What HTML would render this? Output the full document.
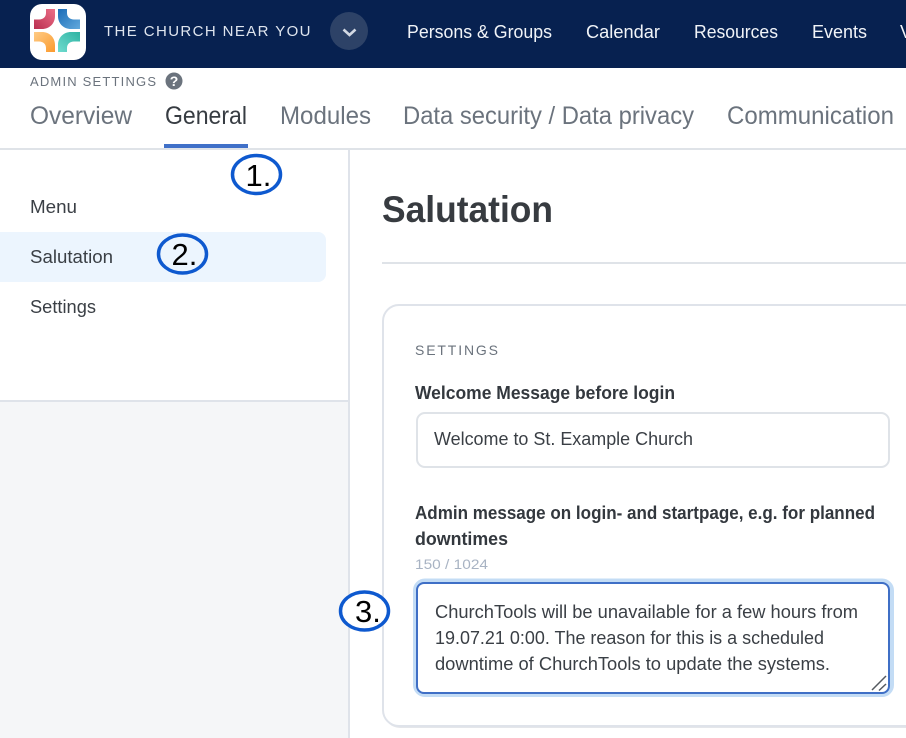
<!DOCTYPE html>
<html lang="en">
<head>
<meta charset="utf-8">
<title>Admin Settings</title>
<style>
html,body{margin:0;padding:0;width:906px;height:738px;overflow:hidden;background:#fff}
svg{display:block}
text{font-family:"Liberation Sans",sans-serif;white-space:pre}
.nav{font-size:18px;fill:#f1f4f8}
.tab{font-size:25px;fill:#6b737d}
.side{font-size:18px;fill:#3a3f45}
.b{font-size:18px;font-weight:bold;fill:#33383e}
.t{font-size:18px;fill:#3a3f45}
.n{font-size:31px;fill:#000}
</style>
</head>
<body>
<svg width="906" height="738" viewBox="0 0 906 738" xmlns="http://www.w3.org/2000/svg">
<defs>
<linearGradient id="g1" x1="0" y1="1" x2="1" y2="0"><stop offset="0" stop-color="#b92f4f"/><stop offset="1" stop-color="#ec6f88"/></linearGradient>
<linearGradient id="g2" x1="0" y1="0" x2="1" y2="1"><stop offset="0" stop-color="#1a6cb8"/><stop offset="1" stop-color="#62a9dc"/></linearGradient>
<linearGradient id="g3" x1="0" y1="0" x2="1" y2="1"><stop offset="0" stop-color="#fecb85"/><stop offset="1" stop-color="#fb9a2e"/></linearGradient>
<linearGradient id="g4" x1="1" y1="0" x2="0" y2="1"><stop offset="0" stop-color="#2fb3a3"/><stop offset="1" stop-color="#6fdccf"/></linearGradient>
</defs>

<!-- Header -->
<rect x="0" y="0" width="906" height="68" fill="#072150"/>
<rect x="30" y="4" width="56" height="56" rx="12" fill="#fff"/>
<path d="M46 9H55V16C55 24 49 29 42 29H34V19.5H39C43 19.5 46 17 46 13Z" fill="url(#g1)"/>
<path d="M58 9H67V13C67 17 70 19.5 74 19.5H80V29H71C64 29 58 24 58 16Z" fill="url(#g2)"/>
<path d="M34 32H42C49 32 55 37 55 45V52H46V48C46 44 43 41.5 39 41.5H34Z" fill="url(#g3)"/>
<path d="M80 32V41.5H74C70 41.5 67 44 67 48V52H58V45C58 37 64 32 71 32Z" fill="url(#g4)"/>
<text x="104" y="36" font-size="15" fill="#dfe5ee" textLength="206.5" lengthAdjust="spacing">THE CHURCH NEAR YOU</text>
<circle cx="349" cy="31" r="19" fill="#2d4267"/>
<path d="M343.5 29.5L349.5 35L355.5 29.5" fill="none" stroke="#d3d9e3" stroke-width="2.6"/>
<text class="nav" x="407" y="38" textLength="145" lengthAdjust="spacingAndGlyphs">Persons &amp; Groups</text>
<text class="nav" x="586" y="38" textLength="74" lengthAdjust="spacingAndGlyphs">Calendar</text>
<text class="nav" x="694" y="38" textLength="84" lengthAdjust="spacingAndGlyphs">Resources</text>
<text class="nav" x="812" y="38" textLength="55" lengthAdjust="spacingAndGlyphs">Events</text>
<text class="nav" x="900" y="38">V</text>

<!-- Sub header -->
<text x="30" y="86" font-size="13" fill="#6b737d" textLength="126" lengthAdjust="spacing">ADMIN SETTINGS</text>
<circle cx="174" cy="81" r="8.5" fill="#6b737d"/>
<text x="174" y="86" font-size="14" font-weight="bold" fill="#fff" text-anchor="middle">?</text>
<text class="tab" x="30" y="124" textLength="102" lengthAdjust="spacingAndGlyphs">Overview</text>
<text class="tab" x="165" y="124" style="fill:#373c42" textLength="82" lengthAdjust="spacingAndGlyphs">General</text>
<text class="tab" x="280" y="124" textLength="91" lengthAdjust="spacingAndGlyphs">Modules</text>
<text class="tab" x="403" y="124" textLength="291" lengthAdjust="spacingAndGlyphs">Data security / Data privacy</text>
<text class="tab" x="727" y="124" textLength="167" lengthAdjust="spacingAndGlyphs">Communication</text>
<rect x="0" y="148" width="906" height="2" fill="#dfe3e8"/>
<rect x="164" y="144" width="84" height="4" fill="#4070c8"/>

<!-- Sidebar -->
<rect x="0" y="402" width="348" height="336" fill="#f5f6f8"/>
<rect x="0" y="400" width="348" height="2" fill="#dfe3ea"/>
<rect x="348" y="150" width="2" height="588" fill="#dfe3ea"/>
<rect x="-10" y="232" width="336" height="50" rx="8" fill="#ecf5fe"/>
<text class="side" x="30" y="213" textLength="47" lengthAdjust="spacingAndGlyphs">Menu</text>
<text class="side" x="30" y="263" textLength="83" lengthAdjust="spacingAndGlyphs">Salutation</text>
<text class="side" x="30" y="313" textLength="66" lengthAdjust="spacingAndGlyphs">Settings</text>

<!-- Main -->
<text x="382" y="222" font-size="37" font-weight="bold" fill="#373b40" textLength="171" lengthAdjust="spacingAndGlyphs">Salutation</text>
<rect x="382" y="262" width="524" height="2" fill="#dfe3e8"/>

<!-- Card -->
<rect x="384" y="308" width="540" height="420" rx="16" fill="#e4e6ea"/>
<rect x="383" y="305" width="540" height="421" rx="16" fill="#fff" stroke="#dfe3ea" stroke-width="2"/>
<text x="415" y="355" font-size="14" fill="#6b737d" textLength="83" lengthAdjust="spacing">SETTINGS</text>
<text class="b" x="415" y="399" textLength="260" lengthAdjust="spacingAndGlyphs">Welcome Message before login</text>
<rect x="417" y="413" width="472" height="54" rx="8" fill="#fff" stroke="#dfe3e8" stroke-width="2"/>
<text class="t" x="434" y="445" textLength="259" lengthAdjust="spacingAndGlyphs">Welcome to St. Example Church</text>
<text class="b" x="415" y="519" textLength="460" lengthAdjust="spacingAndGlyphs">Admin message on login- and startpage, e.g. for planned</text>
<text class="b" x="415" y="545" textLength="93" lengthAdjust="spacingAndGlyphs">downtimes</text>
<text x="415" y="569" font-size="14" fill="#a8b3c3" textLength="73" lengthAdjust="spacingAndGlyphs">150 / 1024</text>

<!-- Textarea -->
<rect x="415" y="580.5" width="477" height="114.5" rx="10" fill="#fff" stroke="#c3dcf5" stroke-width="4"/>
<rect x="417" y="583" width="472" height="110" rx="7" fill="#fff" stroke="#3f6fc6" stroke-width="2"/>
<text class="t" x="435" y="618" textLength="423" lengthAdjust="spacingAndGlyphs">ChurchTools will be unavailable for a few hours from</text>
<text class="t" x="435" y="644" textLength="389" lengthAdjust="spacingAndGlyphs">19.07.21 0:00. The reason for this is a scheduled</text>
<text class="t" x="435" y="670" textLength="395" lengthAdjust="spacingAndGlyphs">downtime of ChurchTools to update the systems.</text>
<path d="M872 690L886 676M879 690.5L886 684" stroke="#555a60" stroke-width="1.5" fill="none"/>

<!-- Annotations -->
<ellipse cx="256.5" cy="174.5" rx="24" ry="19" fill="#fff" stroke="#0e59cf" stroke-width="3.5"/>
<text class="n" x="245.5" y="186">1.</text>
<ellipse cx="182.5" cy="254" rx="24" ry="19" fill="none" stroke="#0e59cf" stroke-width="3.5"/>
<text class="n" x="171.5" y="265">2.</text>
<ellipse cx="364.5" cy="611" rx="24" ry="19" fill="#fff" stroke="#0e59cf" stroke-width="3.5"/>
<text class="n" x="355" y="622">3.</text>
</svg>
</body>
</html>
